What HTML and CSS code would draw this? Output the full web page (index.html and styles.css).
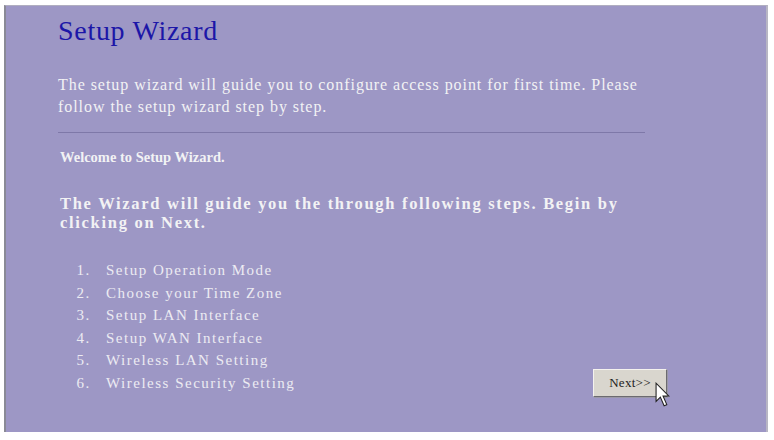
FILE: index.html
```html
<!DOCTYPE html>
<html>
<head>
<meta charset="utf-8">
<link rel="stylesheet" href="styles.css">
</head>
<body>
<div class="panel">
  <h1 class="title">Setup Wizard</h1>
  <p class="intro">The setup wizard will guide you to configure access point for first time. Please follow the setup wizard step by step.</p>
  <hr class="rule">
  <p class="welcome">Welcome to Setup Wizard.</p>
  <p class="guide">The Wizard will guide you the through following steps. Begin by clicking on Next.</p>
  <div class="bottom">
    <ol class="steps">
      <li>Setup Operation Mode</li>
      <li>Choose your Time Zone</li>
      <li>Setup LAN Interface</li>
      <li>Setup WAN Interface</li>
      <li>Wireless LAN Setting</li>
      <li>Wireless Security Setting</li>
    </ol>
    <div class="btnwrap">
      <button class="next">Next&gt;&gt;</button>
      <svg class="cursor" width="15" height="26" viewBox="0 0 14 24">
        <path d="M1 1 L1 18 L5 14 L8.5 22 L11 21 L7.5 13 L13 13 Z" fill="#fff" stroke="#222" stroke-width="1" stroke-linejoin="miter"/>
      </svg>
    </div>
  </div>
</div>
</body>
</html>
```
FILE: styles.css
```css
html, body {
  margin: 0;
  padding: 0;
  background: #ffffff;
}
body {
  width: 774px;
  height: 440px;
  padding: 5px 6px 8px 4px;
  box-sizing: border-box;
}
.panel {
  height: 100%;
  box-sizing: border-box;
  background: #9d97c5;
  border-left: 2px solid #8a8a96;
  border-top: 1px solid #b0aec0;
  border-right: 2px solid #b8b6c4;
  padding: 8px 0 0 52px;
  font-family: "Liberation Serif", "DejaVu Serif", serif;
  color: #f2f2f4;
}
.title {
  margin: 0;
  font-size: 28px;
  font-weight: normal;
  color: #1c16a8;
  line-height: 34px;
  letter-spacing: 0.7px;
}
.intro {
  margin: 26px 0 0 0;
  width: 600px;
  font-size: 16px;
  line-height: 22px;
  letter-spacing: 0.95px;
}
.rule {
  margin: 14px 0 0 0;
  width: 587px;
  border: 0;
  border-top: 1px solid #7e78a8;
  height: 0;
}
.welcome {
  margin: 16px 0 0 2px;
  font-size: 14.5px;
  font-weight: bold;
}
.guide {
  margin: 28px 0 0 2px;
  width: 600px;
  font-size: 16.5px;
  font-weight: bold;
  line-height: 19px;
  letter-spacing: 1.7px;
}
.bottom {
  display: flex;
  align-items: flex-end;
}
.steps {
  margin: 27px 0 0 0;
  padding-left: 38px;
  font-size: 15px;
  line-height: 22.6px;
  width: 535px;
  box-sizing: border-box;
  color: #ecebf2;
  letter-spacing: 1.5px;
}
.steps li {
  padding-left: 10px;
}
.btnwrap {
  position: relative;
  margin-bottom: -2px;
}
.next {
  display: block;
  width: 74px;
  height: 28px;
  background: #d9d6ce;
  border: 1px solid;
  border-color: #f4f2ee #6c6a70 #6c6a70 #f4f2ee;
  box-shadow: 1px 1px 0 #9a98a6;
  font-family: "Liberation Serif", serif;
  font-size: 13px;
  letter-spacing: 0.3px;
  color: #222;
  padding: 0;
}
.cursor {
  position: absolute;
  left: 62px;
  top: 13px;
}
```
